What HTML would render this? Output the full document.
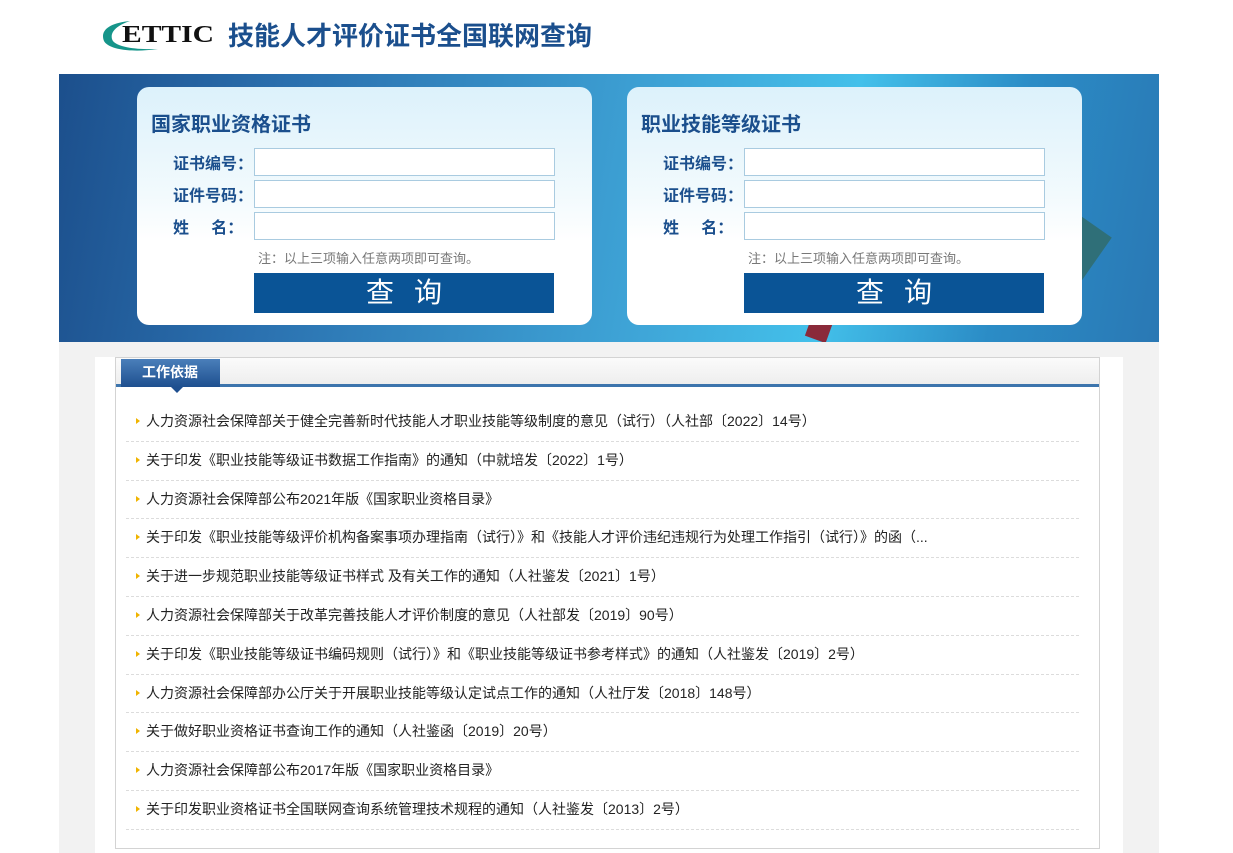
<!DOCTYPE html>
<html><head><meta charset="utf-8"><style>
*{margin:0;padding:0;box-sizing:border-box}
body{width:1233px;height:853px;background:#fff;font-family:"Liberation Sans","Noto Sans CJK SC",sans-serif;position:relative;overflow:hidden}
.abs{position:absolute}
.banner{left:59px;top:74px;width:1100px;height:268px;background:linear-gradient(100deg,#1c4f8c 0%,#2a6fae 20%,#3fa6d8 55%,#43c0ea 70%,#2b8cc6 85%,#2a78b4 100%)}
.card{width:455px;height:238px;top:87px;border-radius:12px;background:linear-gradient(180deg,#dcf1fb 0%,#f2fafd 45%,#fff 65%)}
.card h2{position:absolute;left:14px;top:21px;font-size:20px;color:#1b4f8d;font-weight:bold}
.lbl{position:absolute;left:36px;font-size:16px;font-weight:bold;color:#1b4f8d}
.inp{position:absolute;left:117px;width:301px;height:28px;border:1px solid #a9cbe0;background:#fff}
.note{position:absolute;left:121px;top:161px;font-size:13px;color:#777}
.btn{position:absolute;left:117px;top:186px;width:300px;height:40px;background:#0a5496;color:#fff;font-size:28px;text-align:center;line-height:40px;letter-spacing:20px;padding-left:20px}
.grey{left:59px;top:342px;width:1100px;height:511px;background:#f2f2f2}
.panel{left:95px;top:357px;width:1028px;height:496px;background:#fff}
.box{left:115px;top:357px;width:985px;height:492px;border:1px solid #d3d3d3;background:#fff}
.hdr{position:absolute;left:0;top:0;width:983px;height:29px;background:linear-gradient(#fbfbfb,#eeeeee);border-bottom:3px solid #3d75ad}
.tab{position:absolute;left:5px;top:1px;width:99px;height:28px;background:linear-gradient(#4a7fba,#1e4f8f);color:#fff;font-size:14px;font-weight:bold;line-height:27px;padding-left:21px}
.arr{position:absolute;left:55px;top:29px;width:0;height:0;border-left:6px solid transparent;border-right:6px solid transparent;border-top:6px solid #1e4f8f}
ul{position:absolute;left:10px;top:45px;width:953px;list-style:none}
li{height:38.8px;border-bottom:1px dashed #dcdcdc;font-size:14px;color:#222;line-height:37px;padding-left:20px;position:relative;white-space:nowrap}
li:before{content:"";position:absolute;left:10px;top:15px;border-top:3.5px solid transparent;border-bottom:3.5px solid transparent;border-left:4px solid #f0b400}
</style></head><body>
<div class="abs" style="left:100px;top:17px;width:116px;height:36px">
<svg width="116" height="36"><path d="M30 4 C8 6 0 14 4 24 C8 32 30 36 58 32 C36 33 14 30 12 22 C10 14 18 8 30 4Z" fill="#16958a"/>
<text x="22" y="25" font-family="Liberation Serif" font-weight="bold" font-size="24" fill="#111" textLength="92" lengthAdjust="spacingAndGlyphs">ETTIC</text></svg></div>
<div class="abs" style="left:228px;top:16px;font-size:26px;font-weight:bold;color:#1b4f8d">技能人才评价证书全国联网查询</div>
<div class="abs banner"></div>
<div class="abs" style="left:1040px;top:215px;width:60px;height:60px;background:#2f6f78;transform:rotate(35deg)"></div>
<div class="abs" style="left:808px;top:318px;width:22px;height:22px;background:#8a2a3a;transform:rotate(20deg)"></div>
<div class="abs card" style="left:137px"><h2>国家职业资格证书</h2>
<div class="lbl" style="top:63px">证书编号：</div><div class="lbl" style="top:95px">证件号码：</div><div class="lbl" style="top:127px">姓&nbsp;&nbsp;&nbsp;&nbsp;&nbsp;名：</div>
<div class="inp" style="top:61px"></div><div class="inp" style="top:93px"></div><div class="inp" style="top:125px"></div>
<div class="note">注：以上三项输入任意两项即可查询。</div><div class="btn">查询</div></div>
<div class="abs card" style="left:627px"><h2>职业技能等级证书</h2>
<div class="lbl" style="top:63px">证书编号：</div><div class="lbl" style="top:95px">证件号码：</div><div class="lbl" style="top:127px">姓&nbsp;&nbsp;&nbsp;&nbsp;&nbsp;名：</div>
<div class="inp" style="top:61px"></div><div class="inp" style="top:93px"></div><div class="inp" style="top:125px"></div>
<div class="note">注：以上三项输入任意两项即可查询。</div><div class="btn">查询</div></div>
<div class="abs grey"></div><div class="abs panel"></div>
<div class="abs box"><div class="hdr"></div><div class="tab">工作依据</div><div class="arr"></div>
<ul>
<li>人力资源社会保障部关于健全完善新时代技能人才职业技能等级制度的意见（试行）（人社部〔2022〕14号）</li>
<li>关于印发《职业技能等级证书数据工作指南》的通知（中就培发〔2022〕1号）</li>
<li>人力资源社会保障部公布2021年版《国家职业资格目录》</li>
<li>关于印发《职业技能等级评价机构备案事项办理指南（试行）》和《技能人才评价违纪违规行为处理工作指引（试行）》的函（...</li>
<li>关于进一步规范职业技能等级证书样式 及有关工作的通知（人社鉴发〔2021〕1号）</li>
<li>人力资源社会保障部关于改革完善技能人才评价制度的意见（人社部发〔2019〕90号）</li>
<li>关于印发《职业技能等级证书编码规则（试行）》和《职业技能等级证书参考样式》的通知（人社鉴发〔2019〕2号）</li>
<li>人力资源社会保障部办公厅关于开展职业技能等级认定试点工作的通知（人社厅发〔2018〕148号）</li>
<li>关于做好职业资格证书查询工作的通知（人社鉴函〔2019〕20号）</li>
<li>人力资源社会保障部公布2017年版《国家职业资格目录》</li>
<li>关于印发职业资格证书全国联网查询系统管理技术规程的通知（人社鉴发〔2013〕2号）</li>
</ul></div>
</body></html>
